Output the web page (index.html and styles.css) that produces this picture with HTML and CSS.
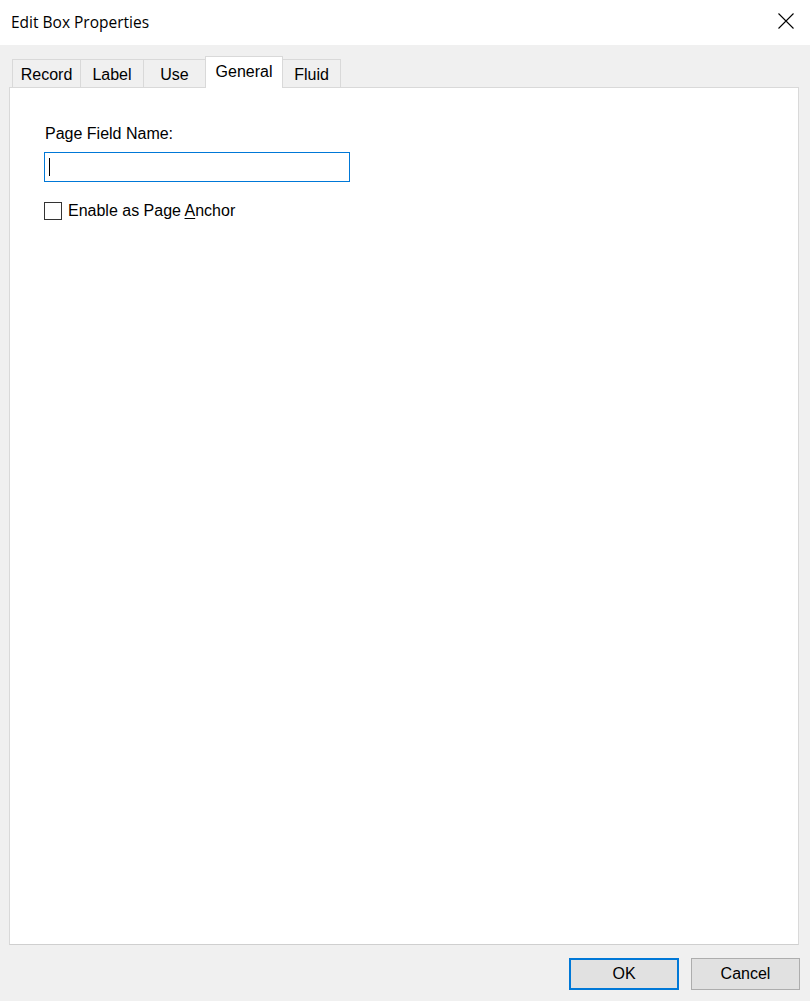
FILE: index.html
```html
<!DOCTYPE html>
<html>
<head>
<meta charset="utf-8">
<link rel="stylesheet" href="styles.css">
</head>
<body>
<div class="window">
  <div class="titlebar">
    <span class="title">Edit Box Properties</span>
    <svg class="close" width="16" height="16" viewBox="0 0 16 16"><path d="M0.5 0.5 L15.5 15.5 M15.5 0.5 L0.5 15.5" stroke="#000" stroke-width="1.1" fill="none"/></svg>
  </div>
  <div class="client">
    <div class="tabs">
      <div class="tab t-record">Record</div>
      <div class="tab t-label">Label</div>
      <div class="tab t-use">Use</div>
      <div class="tab t-general selected">General</div>
      <div class="tab t-fluid">Fluid</div>
    </div>
    <div class="panel">
      <div class="field-label">Page Field Name:</div>
      <div class="textbox"><span class="caret"></span></div>
      <div class="check-row">
        <span class="checkbox"></span>
        <span class="check-text">Enable as Page <u>A</u>nchor</span>
      </div>
    </div>
    <div class="buttons">
      <div class="btn default">OK</div>
      <div class="btn">Cancel</div>
    </div>
  </div>
</div>
</body>
</html>
```

FILE: styles.css
```css
html, body {
  margin: 0;
  padding: 0;
}
body {
  width: 810px;
  height: 1001px;
  background: #f0f0f0;
  font-family: "Liberation Sans", Arial, sans-serif;
  font-size: 16px;
  color: #000;
  overflow: hidden;
}
.window {
  display: flex;
  flex-direction: column;
  height: 1001px;
}
.titlebar {
  height: 45px;
  background: #fff;
  display: flex;
  align-items: center;
  justify-content: space-between;
  padding: 0 16px 0 11px;
  box-sizing: border-box;
}
.title {
  font-family: "Open Sans", "Noto Sans", sans-serif;
  font-size: 15.5px;
  color: #000;
  margin-top: -1px;
}
.close {
  display: block;
  margin-top: -3px;
}
.client {
  display: flex;
  flex-direction: column;
  padding: 11px 11px 0 9px;
  flex: 1;
}
.tabs {
  display: flex;
  align-items: flex-end;
  height: 31px;
  padding-left: 3px;
}
.tab {
  height: 28px;
  box-sizing: border-box;
  border: 1px solid #d9d9d9;
  border-bottom: none;
  border-right: none;
  background: #f0f0f0;
  display: flex;
  justify-content: center;
  align-items: center;
  padding-top: 3px;
  font-size: 16px;
}
.t-record { width: 68px; }
.t-label { width: 63px; }
.t-use { width: 62px; }
.t-general { width: 78px; }
.t-fluid { width: 58px; border-right: 1px solid #d9d9d9; }
.tab.selected {
  height: 32px;
  background: #fff;
  border-right: 1px solid #d9d9d9;
  margin-bottom: -1px;
  position: relative;
  z-index: 1;
  padding-top: 0;
  padding-bottom: 1px;
}
.tab.selected + .tab {
  border-left: none;
}
.panel {
  height: 858px;
  box-sizing: border-box;
  background: #fff;
  border: 1px solid #d9d9d9;
  border-bottom-color: #cfcfcf;
  padding: 36px 0 0 34px;
  display: flex;
  flex-direction: column;
  align-items: flex-start;
}
.field-label {
  line-height: 20px;
  margin-left: 1px;
}
.textbox {
  margin-top: 8px;
  width: 306px;
  height: 30px;
  box-sizing: border-box;
  border: 1px solid #0078d7;
  background: #fff;
  display: flex;
  align-items: center;
  padding-left: 4px;
}
.caret {
  width: 1px;
  height: 18px;
  background: #000;
}
.check-row {
  margin-top: 19px;
  display: flex;
  align-items: center;
  height: 20px;
}
.checkbox {
  width: 18px;
  height: 18px;
  box-sizing: border-box;
  border: 1px solid #333;
  background: #fff;
}
.check-text {
  margin-left: 6px;
  line-height: 20px;
}
.check-text u {
  text-underline-offset: 2px;
}
.buttons {
  display: flex;
  justify-content: flex-end;
  gap: 12px;
  margin-top: 13px;
  margin-right: -1px;
}
.btn {
  width: 109px;
  height: 32px;
  box-sizing: border-box;
  border: 1px solid #adadad;
  background: #e1e1e1;
  display: flex;
  align-items: center;
  justify-content: center;
  font-size: 16px;
}
.btn.default {
  width: 110px;
  border: 2px solid #0078d7;
}
```
